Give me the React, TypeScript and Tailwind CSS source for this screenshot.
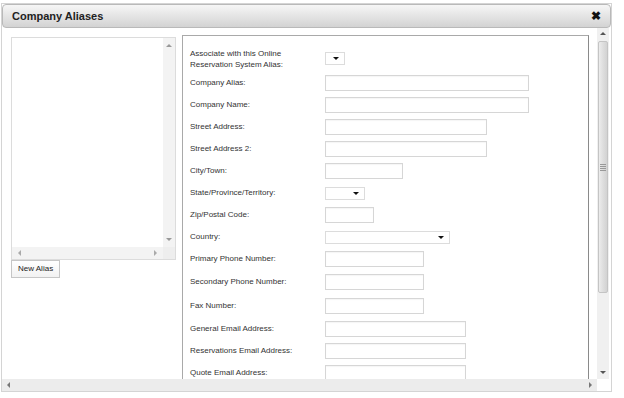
import React from 'react';

type Dir = 'up' | 'down' | 'left' | 'right';

function Arrow({ dir, className = '' }: { dir: Dir; className?: string }) {
  const pts: Record<Dir, string> = {
    up: '0,4 3,1 6,4',
    down: '0,1 3,4 6,1',
    left: '4,0 1,3 4,6',
    right: '1,0 4,3 1,6',
  };
  const vertical = dir === 'up' || dir === 'down';
  return (
    <svg width={vertical ? 6 : 5} height={vertical ? 5 : 6} viewBox={vertical ? '0 0 6 5' : '0 0 5 6'} className={className}>
      <polygon points={pts[dir]} fill="currentColor" />
    </svg>
  );
}

function TextBox({ w }: { w: string }) {
  return <div className={`h-[16px] ${w} border border-[#d6d6d6] bg-white shadow-[inset_0_1px_1px_rgba(0,0,0,0.04)]`} />;
}

function SelectBox({ w }: { w: string }) {
  return (
    <div className={`h-[13px] ${w} border border-[#dcdcdc] bg-white flex items-center justify-end pr-[5px]`}>
      <Arrow dir="down" className="text-[#111]" />
    </div>
  );
}

const fields: { label: string; h: string; control: React.ReactNode }[] = [
  { label: 'Company Alias:', h: 'h-[22px]', control: <TextBox w="w-[204px]" /> },
  { label: 'Company Name:', h: 'h-[22px]', control: <TextBox w="w-[204px]" /> },
  { label: 'Street Address:', h: 'h-[22px]', control: <TextBox w="w-[162px]" /> },
  { label: 'Street Address 2:', h: 'h-[22px]', control: <TextBox w="w-[162px]" /> },
  { label: 'City/Town:', h: 'h-[22px]', control: <TextBox w="w-[78px]" /> },
  { label: 'State/Province/Territory:', h: 'h-[22px]', control: <SelectBox w="w-[40px]" /> },
  { label: 'Zip/Postal Code:', h: 'h-[22px]', control: <TextBox w="w-[49px]" /> },
  { label: 'Country:', h: 'h-[22px]', control: <SelectBox w="w-[125px]" /> },
  { label: 'Primary Phone Number:', h: 'h-[22px]', control: <TextBox w="w-[99px]" /> },
  { label: 'Secondary Phone Number:', h: 'h-[24px]', control: <TextBox w="w-[99px]" /> },
  { label: 'Fax Number:', h: 'h-[24px]', control: <TextBox w="w-[99px]" /> },
  { label: 'General Email Address:', h: 'h-[22px]', control: <TextBox w="w-[141px]" /> },
  { label: 'Reservations Email Address:', h: 'h-[22px]', control: <TextBox w="w-[141px]" /> },
  { label: 'Quote Email Address:', h: 'h-[22px]', control: <TextBox w="w-[141px]" /> },
];

export default function App() {
  return (
    <div className="w-[624px] h-[398px] bg-white overflow-hidden font-['Liberation_Sans',Arial,sans-serif] text-[#333]">
      <div className="ml-[1px] mt-[3px] w-[611px] h-[389px] flex flex-col border border-[#d4d4d4] bg-white">
        {/* title bar */}
        <div className="h-[24px] shrink-0 flex items-center justify-between px-[9px] rounded-[4px] border border-[#b9b9b9] bg-gradient-to-b from-[#f6f6f6] to-[#d3d3d3]">
          <span className="text-[11px] font-bold text-[#222]">Company Aliases</span>
          <span className="text-[12px] font-bold text-[#111] leading-none">✖</span>
        </div>

        {/* body */}
        <div className="flex-1 flex min-h-0">
          <div className="flex-1 flex items-start overflow-hidden pl-[9px]">
            {/* alias list */}
            <div className="mt-[9px] w-[165px] shrink-0">
              <div className="h-[223px] border border-[#dcdcdc] flex flex-col">
                <div className="flex-1 flex">
                  <div className="flex-1 bg-white" />
                  <div className="w-[12px] bg-[#f3f3f3] flex flex-col items-center justify-between py-[5px] text-[#999]">
                    <Arrow dir="up" />
                    <Arrow dir="down" />
                  </div>
                </div>
                <div className="h-[12px] flex">
                  <div className="flex-1 bg-[#f3f3f3] flex items-center justify-between px-[5px] text-[#aaa]">
                    <Arrow dir="left" />
                    <Arrow dir="right" />
                  </div>
                  <div className="w-[12px] bg-[#eeeeee]" />
                </div>
              </div>
              <button className="block h-[18px] px-[6px] border border-[#c6c6c6] bg-gradient-to-b from-white to-[#f2f2f2] text-[8px] text-[#222] leading-none">
                New Alias
              </button>
            </div>

            {/* details form */}
            <div className="ml-[6px] mt-[7px] w-[407px] h-[400px] shrink-0 border border-[#a9a9a9] border-r-[#8a8a8a] bg-white pt-[9px] pl-[7px] text-[8px]">
              <div className="flex items-center h-[27px]">
                <div className="w-[135px] leading-[11px]">
                  Associate with this Online
                  <br />
                  Reservation System Alias:
                </div>
                <SelectBox w="w-[20px]" />
              </div>
              {fields.map((f) => (
                <div key={f.label} className={`flex items-center ${f.h}`}>
                  <div className="w-[135px]">{f.label}</div>
                  {f.control}
                </div>
              ))}
            </div>
          </div>

          {/* vertical scrollbar */}
          <div className="w-[12px] shrink-0 mr-[2px] bg-[#f0f0f0] flex flex-col items-center pt-[3px] pb-[4px] text-[#555]">
            <Arrow dir="up" />
            <div className="mt-[5px] w-[10px] h-[252px] rounded-[2px] border border-[#c4c4c4] bg-gradient-to-r from-[#ececec] via-[#dedede] to-[#d2d2d2] flex flex-col items-center justify-center gap-[1px]">
              <div className="w-[6px] h-[1px] bg-[#999]" />
              <div className="w-[6px] h-[1px] bg-[#999]" />
              <div className="w-[6px] h-[1px] bg-[#999]" />
              <div className="w-[6px] h-[1px] bg-[#999]" />
            </div>
            <div className="flex-1" />
            <Arrow dir="down" />
          </div>
        </div>

        {/* horizontal scrollbar */}
        <div className="h-[12px] shrink-0 flex">
          <div className="flex-1 bg-[#ececec] flex items-center justify-between px-[4px] text-[#777]">
            <Arrow dir="left" />
            <Arrow dir="right" />
          </div>
          <div className="w-[14px] bg-white" />
        </div>
      </div>
    </div>
  );
}
